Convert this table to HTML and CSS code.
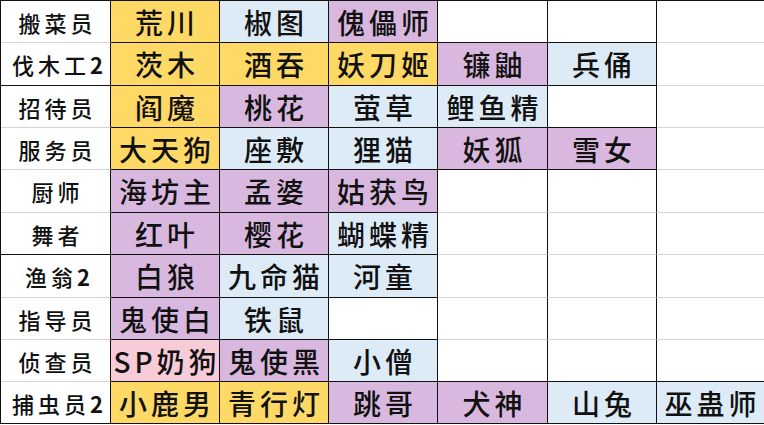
FILE: index.html
```html
<!DOCTYPE html>
<html lang="zh">
<head>
<meta charset="utf-8">
<title>式神分工表</title>
<link rel="stylesheet" href="styles.css">
</head>
<body>
<div class="sheet">
  <div class="c lab gb">搬菜员</div>
  <div class="c nm gold">荒川</div>
  <div class="c nm blue">椒图</div>
  <div class="c nm purple">傀儡师</div>
  <div class="c"></div>
  <div class="c"></div>
  <div class="c last gb rb"></div>

  <div class="c lab">伐木工<b class="num">2</b></div>
  <div class="c nm gold">茨木</div>
  <div class="c nm gold">酒吞</div>
  <div class="c nm gold">妖刀姬</div>
  <div class="c nm purple">镰鼬</div>
  <div class="c nm blue">兵俑</div>
  <div class="c last gb"></div>

  <div class="c lab gb">招待员</div>
  <div class="c nm gold">阎魔</div>
  <div class="c nm purple">桃花</div>
  <div class="c nm blue">萤草</div>
  <div class="c nm blue">鲤鱼精</div>
  <div class="c"></div>
  <div class="c last gb"></div>

  <div class="c lab gb">服务员</div>
  <div class="c nm gold">大天狗</div>
  <div class="c nm blue">座敷</div>
  <div class="c nm blue">狸猫</div>
  <div class="c nm purple">妖狐</div>
  <div class="c nm purple">雪女</div>
  <div class="c last gb"></div>

  <div class="c lab gb">厨师</div>
  <div class="c nm purple">海坊主</div>
  <div class="c nm purple">孟婆</div>
  <div class="c nm purple">姑获鸟</div>
  <div class="c gb"></div>
  <div class="c gb"></div>
  <div class="c last gb"></div>

  <div class="c lab">舞者</div>
  <div class="c nm purple">红叶</div>
  <div class="c nm purple">樱花</div>
  <div class="c nm blue">蝴蝶精</div>
  <div class="c gb"></div>
  <div class="c gb"></div>
  <div class="c last gb"></div>

  <div class="c lab gb">渔翁<b class="num">2</b></div>
  <div class="c nm purple">白狼</div>
  <div class="c nm blue">九命猫</div>
  <div class="c nm blue">河童</div>
  <div class="c gb"></div>
  <div class="c gb"></div>
  <div class="c last gb"></div>

  <div class="c lab gb">指导员</div>
  <div class="c nm purple">鬼使白</div>
  <div class="c nm blue">铁鼠</div>
  <div class="c"></div>
  <div class="c gb"></div>
  <div class="c gb"></div>
  <div class="c last gb"></div>

  <div class="c lab gb">侦查员</div>
  <div class="c nm pink">SP奶狗</div>
  <div class="c nm purple">鬼使黑</div>
  <div class="c nm blue">小僧</div>
  <div class="c"></div>
  <div class="c"></div>
  <div class="c last"></div>

  <div class="c lab">捕虫员<b class="num">2</b></div>
  <div class="c nm gold">小鹿男</div>
  <div class="c nm gold">青行灯</div>
  <div class="c nm purple">跳哥</div>
  <div class="c nm purple">犬神</div>
  <div class="c nm blue">山兔</div>
  <div class="c nm blue last">巫蛊师</div>
</div>
</body>
</html>
```

FILE: styles.css
```css
html, body {
  margin: 0;
  padding: 0;
  background: #ffffff;
}

.sheet {
  display: grid;
  grid-template-columns: 110px 109px 109px 109px 110px 109px 108px;
  grid-template-rows: 42px 43px 42px 42px 43px 42px 43px 42px 42px 42px;
  width: 764px;
  border-top: 1px solid #111;
  border-left: 1px solid #111;
  box-sizing: border-box;
}

.c {
  box-sizing: border-box;
  border-right: 1px solid #111;
  border-bottom: 1px solid #111;
  display: flex;
  align-items: center;
  justify-content: center;
  color: #111;
  white-space: nowrap;
  overflow: hidden;
}

.c.gb {
  border-bottom-color: #d4d4d4;
}

.c.last {
  border-right-color: transparent;
}

.c.last.rb {
  border-right-color: #111;
}

.lab {
  font-family: "Noto Sans CJK SC", "Noto Sans", sans-serif;
  font-size: 22px;
  letter-spacing: 4px;
  padding-left: 4px;
  font-weight: 500;
}

.num {
  font-weight: 700;
  letter-spacing: 0;
}

.nm {
  font-family: "Noto Sans CJK SC", "Noto Sans", sans-serif;
  font-size: 28px;
  letter-spacing: 4px;
  padding-left: 4px;
  font-weight: 500;
}

.gold { background: #ffd966; }
.blue { background: #ddebf7; }
.purple { background: #d9b8e0; }
.pink { background: #f8cbd9; }
```
